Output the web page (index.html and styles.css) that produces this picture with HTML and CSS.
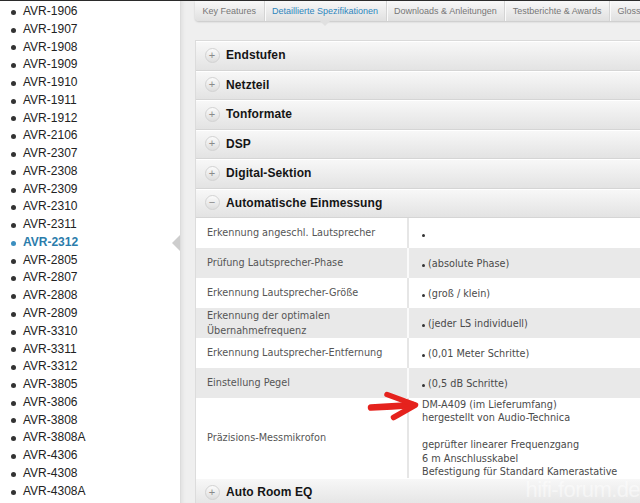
FILE: index.html
```html
<!DOCTYPE html>
<html lang="de">
<head>
<meta charset="utf-8">
<title>AVR-2312 Detaillierte Spezifikationen</title>
<link rel="stylesheet" href="styles.css">
</head>
<body>
<div class="page">
  <aside class="sidebar">
    <ul class="models">
      <li>AVR-1906</li>
      <li>AVR-1907</li>
      <li>AVR-1908</li>
      <li>AVR-1909</li>
      <li>AVR-1910</li>
      <li>AVR-1911</li>
      <li>AVR-1912</li>
      <li>AVR-2106</li>
      <li>AVR-2307</li>
      <li>AVR-2308</li>
      <li>AVR-2309</li>
      <li>AVR-2310</li>
      <li>AVR-2311</li>
      <li class="active">AVR-2312</li>
      <li>AVR-2805</li>
      <li>AVR-2807</li>
      <li>AVR-2808</li>
      <li>AVR-2809</li>
      <li>AVR-3310</li>
      <li>AVR-3311</li>
      <li>AVR-3312</li>
      <li>AVR-3805</li>
      <li>AVR-3806</li>
      <li>AVR-3808</li>
      <li>AVR-3808A</li>
      <li>AVR-4306</li>
      <li>AVR-4308</li>
      <li>AVR-4308A</li>
    </ul>
  </aside>
  <main class="main">
    <nav class="tabs">
      <a class="tab">Key Features</a>
      <a class="tab active">Detaillierte Spezifikationen</a>
      <a class="tab">Downloads &amp; Anleitungen</a>
      <a class="tab">Testberichte &amp; Awards</a>
      <a class="tab">Glossar</a>
    </nav>
    <section class="accordion">
      <div class="acc-head"><span class="toggle">+</span><span class="acc-title">Endstufen</span></div>
      <div class="acc-head"><span class="toggle">+</span><span class="acc-title">Netzteil</span></div>
      <div class="acc-head"><span class="toggle">+</span><span class="acc-title">Tonformate</span></div>
      <div class="acc-head"><span class="toggle">+</span><span class="acc-title">DSP</span></div>
      <div class="acc-head"><span class="toggle">+</span><span class="acc-title">Digital-Sektion</span></div>
      <div class="acc-head open"><span class="toggle">&minus;</span><span class="acc-title">Automatische Einmessung</span></div>
      <div class="spec">
        <div class="row"><div class="label">Erkennung angeschl. Lautsprecher</div><div class="value"><span class="dot"></span></div></div>
        <div class="row alt"><div class="label">Prüfung Lautsprecher-Phase</div><div class="value"><span class="dot"></span> (absolute Phase)</div></div>
        <div class="row"><div class="label">Erkennung Lautsprecher-Größe</div><div class="value"><span class="dot"></span> (groß / klein)</div></div>
        <div class="row alt"><div class="label two">Erkennung der optimalen<br>Übernahmefrequenz</div><div class="value"><span class="dot"></span> (jeder LS individuell)</div></div>
        <div class="row"><div class="label">Erkennung Lautsprecher-Entfernung</div><div class="value"><span class="dot"></span> (0,01 Meter Schritte)</div></div>
        <div class="row alt"><div class="label">Einstellung Pegel</div><div class="value"><span class="dot"></span> (0,5 dB Schritte)</div></div>
        <div class="row tall"><div class="label">Präzisions-Messmikrofon</div><div class="value multi">DM-A409 (im Lieferumfang)<br>hergestellt von Audio-Technica<br><br>geprüfter linearer Frequenzgang<br>6 m Anschlusskabel<br>Befestigung für Standard Kamerastative</div></div>
      </div>
      <div class="acc-head"><span class="toggle">+</span><span class="acc-title">Auto Room EQ</span></div>
    </section>
  </main>
  <svg class="arrow" width="58" height="34" viewBox="0 0 58 34" aria-hidden="true">
    <path d="M5 17.5 Q26 16.5 47 15" fill="none" stroke="#e5221d" stroke-width="6.5" stroke-linecap="round"/>
    <path d="M21 4.5 L49.5 15 L27.5 27.5" fill="none" stroke="#e5221d" stroke-width="5.5" stroke-linecap="round" stroke-linejoin="round"/>
  </svg>
  <div class="watermark">hifi-forum.de</div>
</div>
</body>
</html>
```
FILE: styles.css
```css
html, body {
  margin: 0;
  padding: 0;
  overflow: hidden;
}

body {
  border-top: 1px solid #2b2b2b;
  background: #fff;
  font-family: "Liberation Sans", Arial, sans-serif;
}

.page {
  position: relative;
  display: flex;
  height: 502px;
}

/* ---------- sidebar ---------- */
.sidebar {
  width: 180px;
  flex: 0 0 180px;
  background: #fff;
  position: relative;
}

.models {
  list-style: none;
  margin: 0;
  padding: 2px 0 0 0;
}

.models li {
  position: relative;
  padding-left: 23px;
  font-size: 12px;
  line-height: 17.77px;
  color: #222;
}

.models li::before {
  content: "";
  position: absolute;
  left: 11px;
  top: 50%;
  width: 5px;
  height: 5px;
  margin-top: -2px;
  border-radius: 50%;
  background: #333;
}

.models li.active {
  color: #2b7cab;
  font-weight: bold;
}

.models li.active::before {
  background: #3b8fc0;
}

.models li.active::after {
  content: "";
  position: absolute;
  right: 0;
  top: 50%;
  margin-top: -8px;
  border-top: 8px solid transparent;
  border-bottom: 8px solid transparent;
  border-right: 8px solid #cdcdcd;
}

/* ---------- main ---------- */
.main {
  flex: 1;
  min-width: 0;
  background: #efefef;
  border-left: 1px solid #dcdcdc;
  box-shadow: inset 4px 0 4px -3px rgba(0, 0, 0, 0.08);
  padding-left: 14px;
}

.tabs {
  display: flex;
  width: 520px;
  height: 20px;
  background: linear-gradient(#f8f8f8, #e0e0e0);
  border-bottom-left-radius: 4px;
  box-shadow: 0 1px 2px rgba(0, 0, 0, 0.18);
}

.tab {
  position: relative;
  flex: 0 0 auto;
  padding: 0 7.5px;
  font-size: 9px;
  line-height: 20px;
  color: #777;
  white-space: nowrap;
  border-left: 1px solid #d4d4d4;
  box-shadow: inset 1px 0 0 #fafafa;
}

.tab:first-child {
  border-left: 0;
  box-shadow: none;
}

.tab.active {
  color: #2f86bd;
}

.tab.active::after {
  content: "";
  position: absolute;
  left: 50%;
  bottom: -5px;
  margin-left: -5px;
  border-left: 5px solid transparent;
  border-right: 5px solid transparent;
  border-top: 5px solid #e0e0e0;
}

/* ---------- accordion ---------- */
.accordion {
  margin-top: 19px;
  width: 520px;
  border-top: 1px solid #dadada;
  border-left: 1px solid #dcdcdc;
  background: #fff;
}

.acc-head {
  display: flex;
  align-items: center;
  gap: 6.5px;
  height: 28.5px;
  padding-left: 8.5px;
  background: linear-gradient(#f8f8f8, #e3e3e3);
  border-bottom: 1px solid #d5d5d5;
  box-shadow: inset 0 1px 0 #fff;
}

.toggle {
  display: flex;
  align-items: center;
  justify-content: center;
  width: 13px;
  height: 13px;
  border-radius: 50%;
  border: 1px solid #d2d2d2;
  background: linear-gradient(#fbfbfb, #dedede);
  color: #8a8a8a;
  font-size: 11px;
  line-height: 1;
}

.acc-title {
  font-size: 12px;
  font-weight: bold;
  color: #151515;
  letter-spacing: 0.1px;
}

/* ---------- spec table ---------- */
.spec {
  font-family: "DejaVu Sans", Verdana, sans-serif;
  font-size: 9.7px;
}

.row {
  display: flex;
  height: 30px;
  background: #fff;
}

.row.alt {
  background: #e9e9e9;
}

.label {
  display: flex;
  align-items: center;
  width: 200px;
  flex: 0 0 200px;
  padding-left: 11px;
  border-right: 2px solid #e6e6e6;
  color: #555;
  line-height: 14px;
}

.row.alt .label {
  border-right-color: #fafafa;
}

.label.two {
  line-height: 15.5px;
}

.value {
  display: flex;
  align-items: center;
  padding-left: 13px;
  color: #4a4a4a;
  white-space: pre;
}

.row.tall {
  height: 80px;
}

.value.multi {
  display: block;
  white-space: normal;
  line-height: 13.4px;
  padding-top: 0;
}

.dot {
  display: inline-block;
  width: 3px;
  height: 3px;
  border-radius: 50%;
  background: #333;
  margin-top: 5px;
}

/* ---------- annotations ---------- */
.arrow {
  position: absolute;
  left: 366px;
  top: 389px;
}

.watermark {
  position: absolute;
  right: 0;
  bottom: 4px;
  font-family: "Liberation Sans", Arial, sans-serif;
  font-size: 22px;
  line-height: 18px;
  letter-spacing: -0.6px;
  color: rgba(255, 255, 255, 0.5);
  pointer-events: none;
}
```
